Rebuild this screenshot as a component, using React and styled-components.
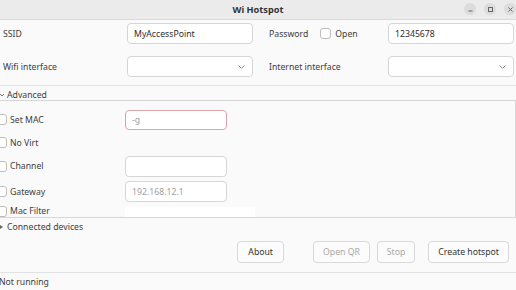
import styled, { createGlobalStyle } from 'styled-components';

const Global = createGlobalStyle`
  html, body { margin: 0; padding: 0; }
  body {
    width: 516px;
    height: 290px;
    overflow: hidden;
    background: #fafafa;
    font-family: "Noto Sans", "DejaVu Sans", sans-serif;
    font-size: 8.7px;
    color: #404040;
  }
`;

const Window = styled.div`
  width: 516px;
  height: 290px;
  display: flex;
  flex-direction: column;
  overflow: hidden;
  background: #fafafa;
`;

const TitleBar = styled.div`
  height: 19px;
  flex: 0 0 19px;
  background: #ebebeb;
  border-bottom: 1px solid #dadada;
  display: flex;
  align-items: center;
  justify-content: center;
  position: relative;
  font-weight: 700;
  font-size: 9.2px;
  color: #333;
`;

const WinButtons = styled.div`
  position: absolute;
  right: 0;
  top: 3px;
  display: flex;
  gap: 8px;
`;

const WinBtn = styled.div`
  width: 12px;
  height: 12px;
  border-radius: 50%;
  background: #dcdcdc;
  display: flex;
  align-items: center;
  justify-content: center;
`;

const TopGrid = styled.div`
  display: grid;
  grid-template-columns: 124px 126px 16px 119px 126px;
  grid-auto-rows: 21px;
  row-gap: 12px;
  padding: 3px 0 0 3px;
  align-items: center;
`;

const Label = styled.div`
  grid-column: ${(p) => p.$col};
`;

const PassCell = styled.div`
  grid-column: 4;
  display: flex;
  align-items: center;
`;

const Input = styled.div`
  box-sizing: border-box;
  height: ${(p) => p.$h || 21}px;
  width: ${(p) => (p.$w ? `${p.$w}px` : '100%')};
  background: #fff;
  border: 1px solid ${(p) => (p.$error ? '#e0a3aa' : '#d6d6d6')};
  border-radius: 4px;
  padding: 0 6px;
  display: flex;
  align-items: center;
  color: ${(p) => (p.$placeholder ? '#a0a0a0' : '#2e2e2e')};
  grid-column: ${(p) => p.$col || 'auto'};
`;

const Combo = styled(Input)`
  justify-content: flex-end;
  padding-right: 7px;
`;

const Check = styled.span`
  box-sizing: border-box;
  display: inline-block;
  width: 11px;
  height: 11px;
  border: 1px solid #bdbdbd;
  border-radius: 3px;
  background: #fff;
  margin-right: ${(p) => p.$gap || 3}px;
  flex: 0 0 auto;
`;

const Separator = styled.div`
  height: 1px;
  flex: 0 0 1px;
  background: #e2e2e2;
  margin-top: ${(p) => p.$mt || 0}px;
`;

const Expander = styled.div`
  height: ${(p) => p.$h}px;
  flex: 0 0 ${(p) => p.$h}px;
  display: flex;
  align-items: center;
  gap: 2px;
  margin-left: -1px;
  padding-top: ${(p) => p.$pt || 0}px;
  box-sizing: border-box;
`;

const Frame = styled.div`
  height: 118px;
  flex: 0 0 118px;
  box-sizing: border-box;
  border: 1px solid #d6d6d6;
  border-left: none;
  background: #fafafa;
  overflow: hidden;
`;

const FrameInner = styled.div`
  margin-left: -4px;
  padding-top: 7px;
  display: flex;
  flex-direction: column;
`;

const OptRow = styled.div`
  height: ${(p) => p.$h}px;
  display: grid;
  grid-template-columns: 129px 130px;
  align-items: center;
`;

const OptLabel = styled.div`
  display: flex;
  align-items: center;
  align-self: ${(p) => p.$self || 'center'};
`;

const MacBox = styled.div`
  height: 12px;
  align-self: end;
  background: #fff;
`;

const ButtonRow = styled.div`
  height: 22px;
  flex: 0 0 22px;
  margin-top: 5px;
  display: flex;
  justify-content: flex-end;
  padding-right: 7px;
`;

const Button = styled.div`
  box-sizing: border-box;
  height: 22px;
  padding: 0 ${(p) => p.$px || 9}px;
  border: 1px solid #d8d8d8;
  border-radius: 4px;
  background: #fcfcfc;
  display: flex;
  align-items: center;
  color: ${(p) => (p.$disabled ? '#a8a8a8' : '#333')};
  margin-left: ${(p) => p.$ml || 0}px;
`;

const Status = styled.div`
  height: 18px;
  display: flex;
  align-items: center;
  margin-left: -1px;
`;

const Chevron = ({ open }) => (
  <svg width="6" height="6" viewBox="0 0 6 6">
    {open ? (
      <path d="M1 2 L3 4 L5 2" fill="none" stroke="#666" strokeWidth="0.9" />
    ) : (
      <path d="M1 1 L4 3 L1 5 Z" fill="#666" />
    )}
  </svg>
);

const ComboArrow = () => (
  <svg width="7" height="4" viewBox="0 0 7 4">
    <path d="M0.5 0.5 L3.5 3.5 L6.5 0.5" fill="none" stroke="#888" strokeWidth="0.9" />
  </svg>
);

const App = () => (
  <Window>
    <Global />
    <TitleBar>
      Wi Hotspot
      <WinButtons>
        <WinBtn>
          <svg width="7" height="7" viewBox="0 0 7 7"><path d="M1.5 5 H5.5" stroke="#666" strokeWidth="1" /></svg>
        </WinBtn>
        <WinBtn>
          <svg width="7" height="7" viewBox="0 0 7 7"><rect x="1.5" y="1.5" width="4" height="4" fill="none" stroke="#666" strokeWidth="1" /></svg>
        </WinBtn>
        <WinBtn>
          <svg width="7" height="7" viewBox="0 0 7 7"><path d="M1.5 1.5 L5.5 5.5 M5.5 1.5 L1.5 5.5" stroke="#666" strokeWidth="1" /></svg>
        </WinBtn>
      </WinButtons>
    </TitleBar>

    <TopGrid>
      <Label $col={1}>SSID</Label>
      <Input $col={2}>MyAccessPoint</Input>
      <PassCell>
        Password
        <span style={{ width: 12 }} />
        <Check $gap={4} />
        Open
      </PassCell>
      <Input $col={5}>12345678</Input>

      <Label $col={1}>Wifi interface</Label>
      <Combo $col={2}><ComboArrow /></Combo>
      <Label $col={4}>Internet interface</Label>
      <Combo $col={5}><ComboArrow /></Combo>
    </TopGrid>

    <Separator $mt={8} />
    <Expander $h={14} $pt={3}>
      <Chevron open />
      Advanced
    </Expander>

    <Frame>
      <FrameInner>
        <OptRow $h={23}>
          <OptLabel><Check $gap={3} />Set MAC</OptLabel>
          <Input $w={102} $h={20} $error $placeholder>-g</Input>
        </OptRow>
        <OptRow $h={23}>
          <OptLabel><Check $gap={3} />No Virt</OptLabel>
        </OptRow>
        <OptRow $h={24}>
          <OptLabel><Check $gap={3} />Channel</OptLabel>
          <Input $w={102} $h={21} />
        </OptRow>
        <OptRow $h={27}>
          <OptLabel><Check $gap={3} />Gateway</OptLabel>
          <Input $w={102} $h={21} $placeholder>192.168.12.1</Input>
        </OptRow>
        <OptRow $h={14}>
          <OptLabel $self="start"><Check $gap={3} />Mac Filter</OptLabel>
          <MacBox />
        </OptRow>
      </FrameInner>
    </Frame>

    <Expander $h={18}>
      <Chevron />
      Connected devices
    </Expander>

    <ButtonRow>
      <Button $px={10}>About</Button>
      <Button $disabled $ml={29}>Open QR</Button>
      <Button $disabled $ml={7}>Stop</Button>
      <Button $ml={13}>Create hotspot</Button>
    </ButtonRow>

    <Separator $mt={9} />
    <Status>Not running</Status>
  </Window>
);

export default App;
